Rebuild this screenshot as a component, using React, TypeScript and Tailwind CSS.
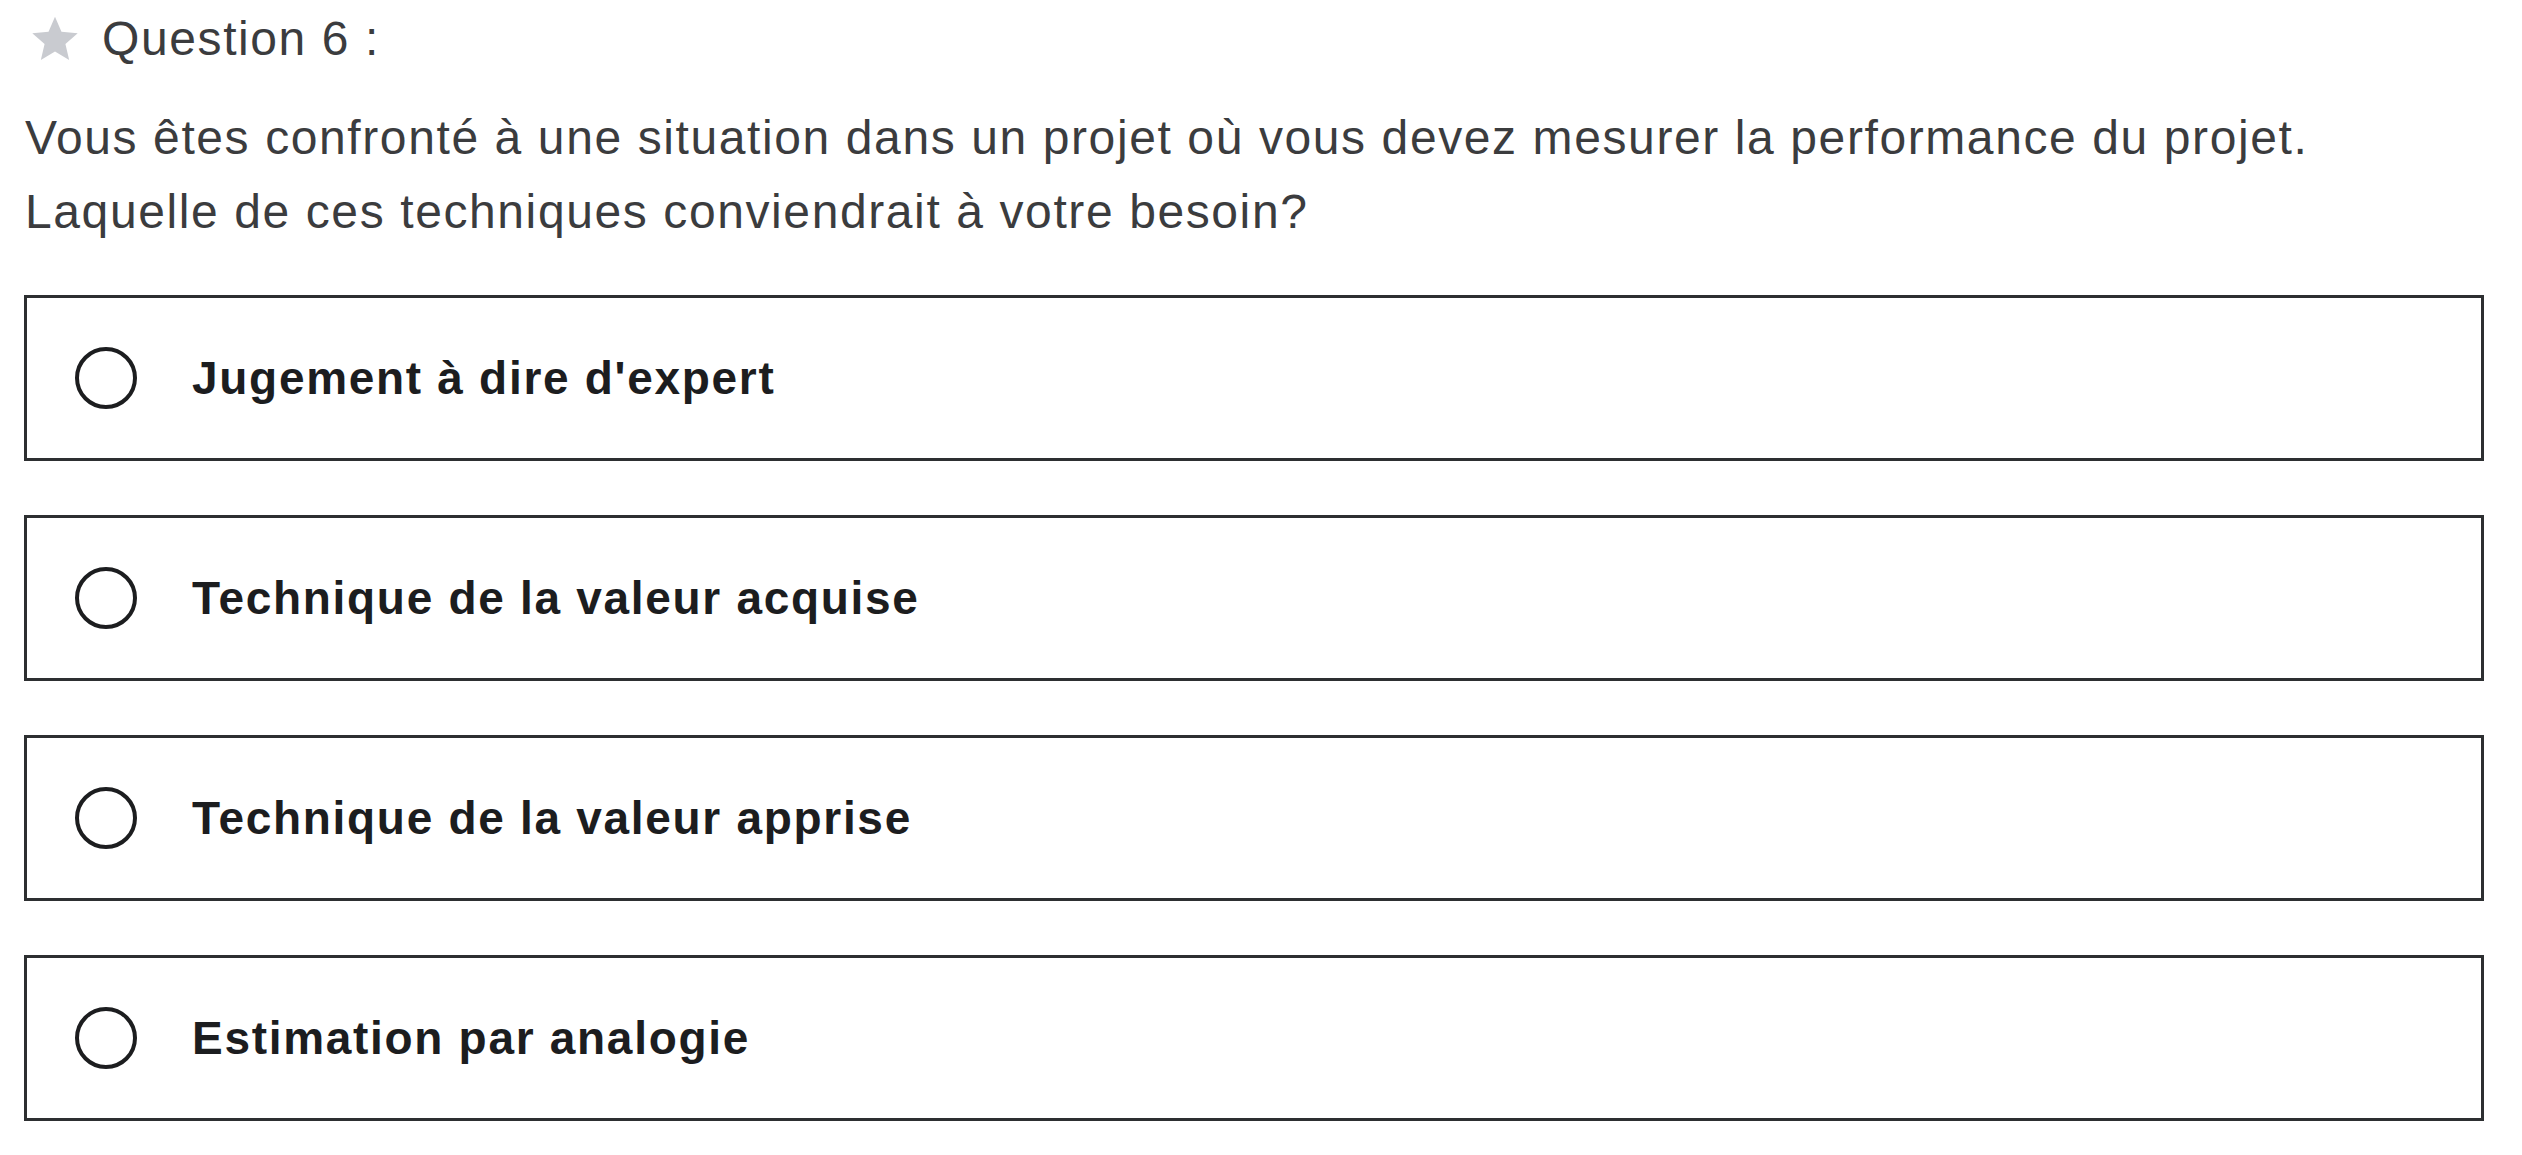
const options = [
  "Jugement à dire d'expert",
  "Technique de la valeur acquise",
  "Technique de la valeur apprise",
  "Estimation par analogie",
];

function StarIcon() {
  return (
    <svg width="50" height="48" viewBox="0 0 24 23" className="shrink-0">
      <path
        d="M12 0.8l3.1 7.2 7.8 0.7-5.9 5.2 1.8 7.7L12 17.5l-6.8 4.1 1.8-7.7-5.9-5.2 7.8-0.7z"
        fill="#c9cbd0"
      />
    </svg>
  );
}

export default function App() {
  return (
    <main className="min-h-screen bg-white font-['Liberation_Sans',Arial,sans-serif]">
      {/* EN-TÊTE DE LA QUESTION */}
      <div className="flex items-center h-[78px] pl-[30px] gap-[22px]">
        <StarIcon />
        <span className="text-[48px] tracking-[1.6px] text-[#3b3c3e]">Question 6 :</span>
      </div>

      {/* ÉNONCÉ */}
      <p className="mt-[23px] pl-[25px] text-[48px] tracking-[1.6px] leading-[74px] text-[#3b3c3e]">
        Vous êtes confronté à une situation dans un projet où vous devez mesurer la performance du projet.
        <br />
        Laquelle de ces techniques conviendrait à votre besoin?
      </p>

      {/* RÉPONSES */}
      <div className="mt-[46px] pl-6 flex flex-col gap-[54px]">
        {options.map((opt) => (
          <label
            key={opt}
            className="w-[2460px] h-[166px] border-[3px] border-[#2d2f31] flex items-center pl-[48px] gap-[55px] cursor-pointer"
          >
            <span className="w-[62px] h-[62px] rounded-full border-[4px] border-[#1c1d1f] shrink-0" />
            <span className="text-[46px] tracking-[1.7px] font-bold text-[#1c1d1f]">{opt}</span>
          </label>
        ))}
      </div>
    </main>
  );
}
